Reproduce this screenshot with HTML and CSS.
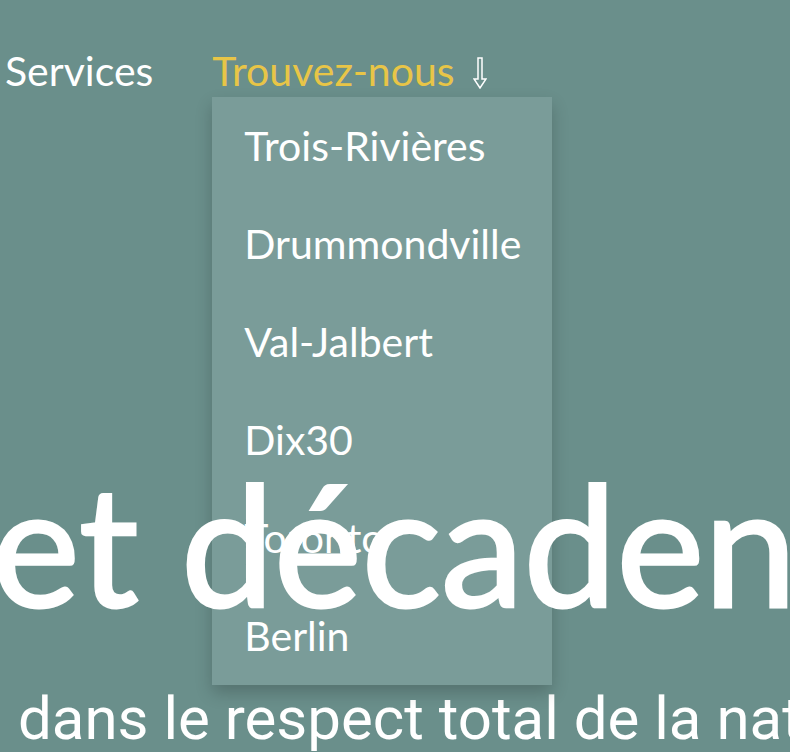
FILE: index.html
```html
<!DOCTYPE html>
<html lang="fr">
<head>
<meta charset="utf-8">
<title>Trouvez-nous</title>
<link rel="stylesheet" href="styles.css">
</head>
<body>
<header class="nav">
  <a class="nav-link" href="#">Services</a>
  <div class="nav-item">
    <a class="nav-link active" href="#">Trouvez-nous<svg class="arrow" width="14" height="32" viewBox="0 0 14 32" aria-hidden="true"><path d="M5 1 H9 V22 H13 L7 31 L1 22 H5 Z" fill="none" stroke="#ffffff" stroke-width="1.5" stroke-linejoin="miter"/></svg></a>
    <ul class="dropdown">
      <li>Trois-Rivières</li>
      <li>Drummondville</li>
      <li>Val-Jalbert</li>
      <li>Dix30</li>
      <li>Toronto</li>
      <li>Berlin</li>
    </ul>
  </div>
</header>
<section class="hero">
  <h1 class="hero-title">et décadence</h1>
  <p class="hero-sub">dans le respect total de la nature</p>
</section>
</body>
</html>
```
FILE: styles.css
```css
html, body {
  margin: 0;
  padding: 0;
}
body {
  width: 790px;
  height: 752px;
  overflow: hidden;
  background: #6a8f8b;
  color: #ffffff;
  font-family: "Lato", "DejaVu Sans", sans-serif;
}
.nav {
  display: flex;
  align-items: flex-start;
  gap: 59px;
  padding: 44px 0 0 5px;
  height: 53px;
}
.nav-link {
  color: #ffffff;
  text-decoration: none;
  font-size: 41px;
  line-height: 53px;
  white-space: nowrap;
}
.nav-link.active {
  color: #e8c547;
}
.arrow {
  margin-left: 18px;
  vertical-align: -3px;
}
.nav-item {
  position: relative;
}
.dropdown {
  position: absolute;
  left: 0;
  top: 53px;
  z-index: 1;
  width: 340px;
  margin: 0;
  padding: 0;
  list-style: none;
  background: #7a9c99;
  box-shadow: 0 8px 16px rgba(0, 0, 0, 0.2);
}
.dropdown li {
  padding: 0 0 0 32px;
  font-size: 41px;
  line-height: 98px;
  height: 98px;
  white-space: nowrap;
}
.hero {
  padding-top: 366px;
}
.hero-title {
  position: relative;
  z-index: 2;
  margin: 0 0 0 -8px;
  font-size: 166px;
  font-weight: 400;
  line-height: 160px;
  white-space: nowrap;
  -webkit-text-stroke: 3px #ffffff;
}
.hero-sub {
  margin: 0 0 0 18px;
  padding-top: 62px;
  font-family: "Roboto", sans-serif;
  font-size: 60px;
  line-height: 68px;
  white-space: nowrap;
}
```
